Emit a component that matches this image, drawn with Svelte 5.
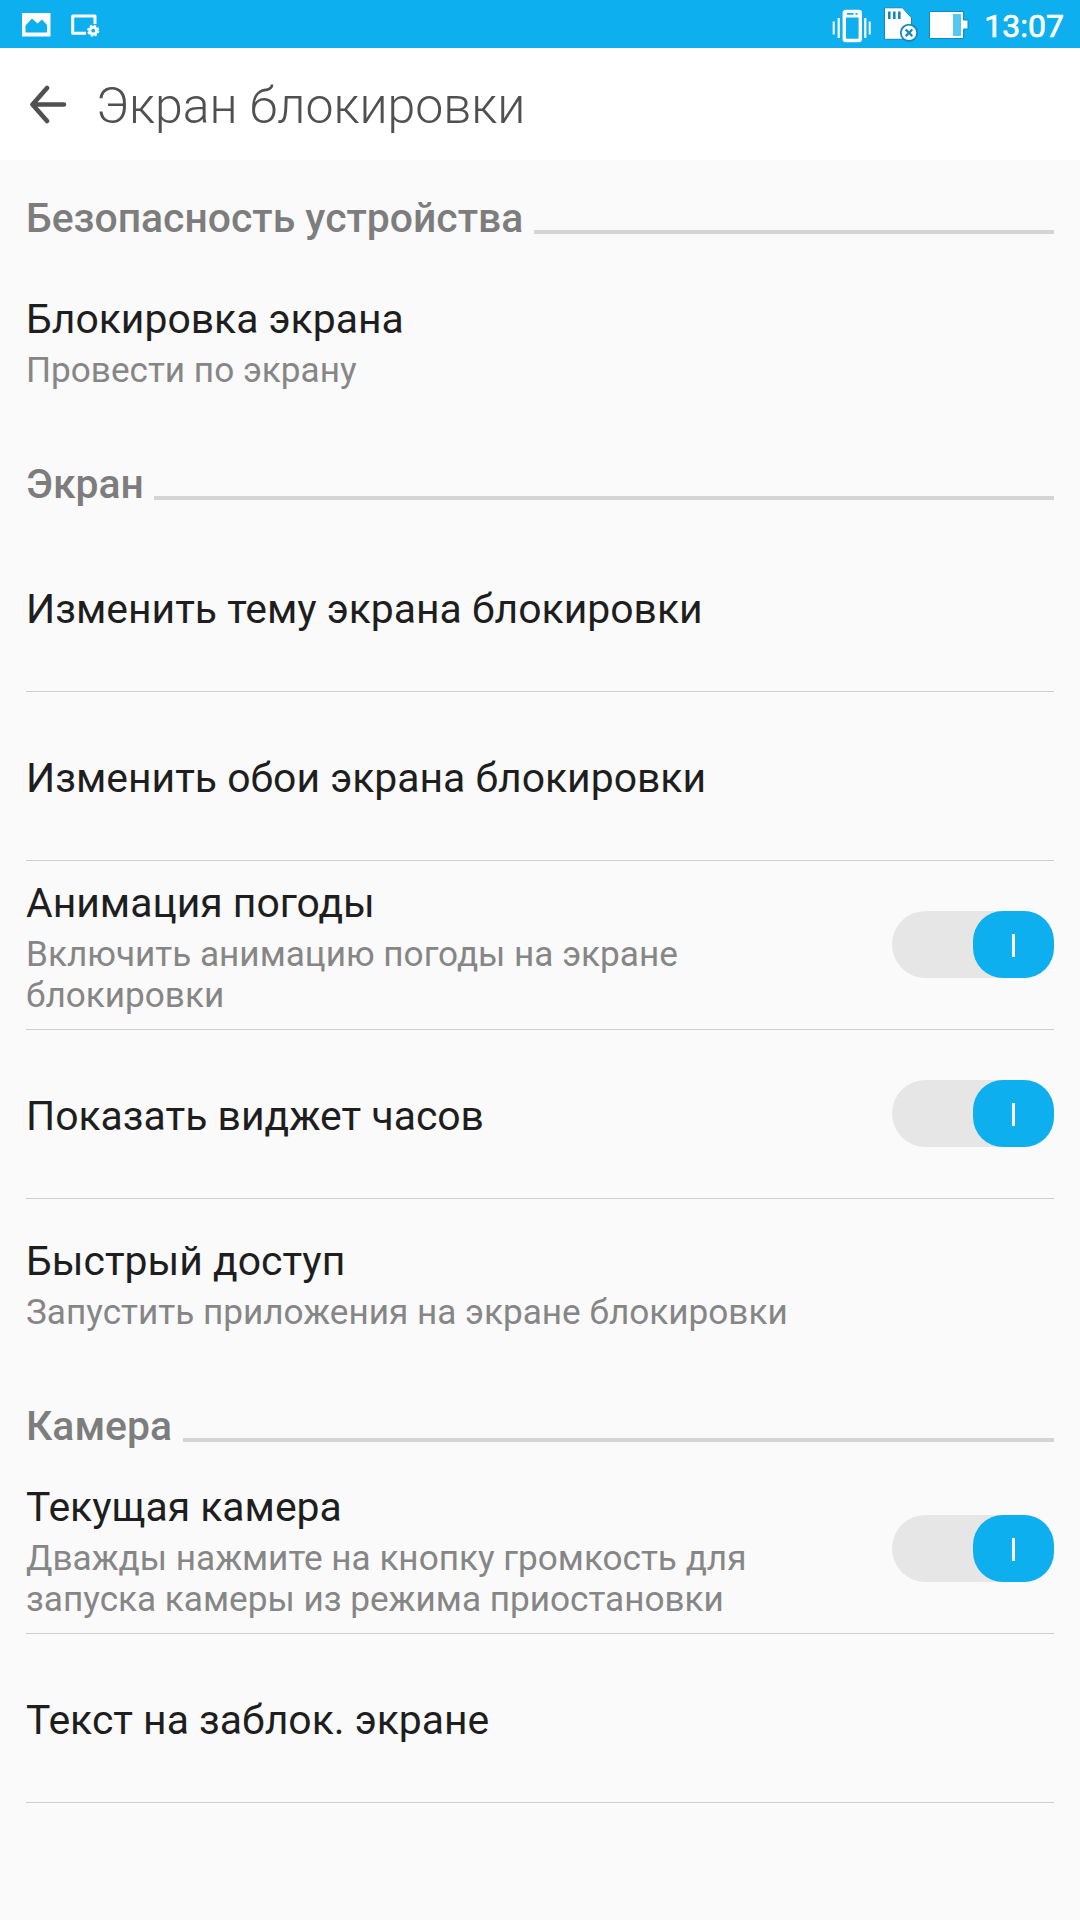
<script>
  let sections = $state([
    {
      title: "Безопасность устройства",
      items: [{ title: "Блокировка экрана", summary: "Провести по экрану" }],
    },
    {
      title: "Экран",
      items: [
        { title: "Изменить тему экрана блокировки", divider: true },
        { title: "Изменить обои экрана блокировки", divider: true },
        {
          title: "Анимация погоды",
          summary: "Включить анимацию погоды на экране блокировки",
          toggle: true,
          on: true,
          divider: true,
        },
        { title: "Показать виджет часов", toggle: true, on: true, divider: true },
        {
          title: "Быстрый доступ",
          summary: "Запустить приложения на экране блокировки",
        },
      ],
    },
    {
      title: "Камера",
      items: [
        {
          title: "Текущая камера",
          summary:
            "Дважды нажмите на кнопку громкость для запуска камеры из режима приостановки",
          toggle: true,
          on: true,
          divider: true,
        },
        { title: "Текст на заблок. экране", divider: true },
      ],
    },
  ]);
</script>

<div class="screen">
  <div class="status">
    <svg width="120" height="48" viewBox="0 0 120 48">
      <path
        fill="#fff"
        fill-rule="evenodd"
        d="M22 13h28.500v23.500h-28.500z M25.500 32.500h21.500v-7.500l-5-5.500-4.500 4-5.500-5-6.500 7z"
      />
      <path
        fill="none"
        stroke="#fff"
        stroke-width="3"
        stroke-linejoin="round"
        d="M86 33.200H72.700V16H95v8"
      />
      <circle cx="93.200" cy="30.700" r="3.400" fill="none" stroke="#fff" stroke-width="3" />
      <circle
        cx="93.200"
        cy="30.700"
        r="5.200"
        fill="none"
        stroke="#fff"
        stroke-width="1.800"
        stroke-dasharray="2.300 1.784"
      />
    </svg>
    <div class="status-right">
      <svg width="162" height="48" viewBox="0 0 162 48">
        <g fill="none" stroke="#fff">
          <rect x="24.300" y="11.500" width="16" height="29" rx="1.500" stroke-width="3.400" />
          <path d="M24 14h17" stroke-width="7" />
          <path d="M18.700 18v20M45.300 18v20" stroke-width="2.200" />
          <path d="M13.700 21.500v13M49.700 21.500v13" stroke-width="2" />
        </g>
        <path d="M27 13.900h6.500M35.500 13.900h2" stroke="#0dafef" stroke-width="1.800" />

        <path d="M64.500 7.800h18l9 10v21.500h-27z" fill="#fff" stroke="#1089bd" />
        <path
          d="M69.300 11.500v7.500M74.300 11.500v7.500M79.300 11.500v7.500"
          stroke="#1089bd"
          stroke-width="2.600"
        />
        <circle cx="89" cy="32.800" r="8.200" fill="#fff" stroke="#1089bd" stroke-width="1.800" />
        <path
          d="M85.700 29.500l6.600 6.600M92.300 29.500l-6.600 6.600"
          stroke="#1089bd"
          stroke-width="2.200"
        />

        <path
          d="M109.500 11.500h34v8.500h4.500v9h-4.500v9.500h-34z"
          fill="#fff"
          stroke="#1089bd"
        />
        <path d="M133 14h8v22h-8z" fill="#56c7f3" />
      </svg>
      <span class="clock">13:07</span>
    </div>
  </div>

  <header>
    <svg class="back" width="38" height="40" viewBox="0 0 38 40">
      <path
        d="M17 3L2.500 19.500L17 36M3.500 19.500H34"
        fill="none"
        stroke="#505050"
        stroke-width="4.600"
        stroke-linecap="round"
        stroke-linejoin="round"
      />
    </svg>
    <h1>Экран блокировки</h1>
  </header>

  <main>
    {#each sections as section}
      <h2><span>{section.title}</span></h2>
      {#each section.items as item}
        <div class="row" class:divider={item.divider}>
          <div class="text">
            <div class="title">{item.title}</div>
            {#if item.summary}
              <div class="summary">{item.summary}</div>
            {/if}
          </div>
          {#if item.toggle}
            <button
              class="toggle"
              class:on={item.on}
              aria-label={item.title}
              onclick={() => (item.on = !item.on)}
            >
              <span class="thumb"><i></i></span>
            </button>
          {/if}
        </div>
      {/each}
    {/each}
  </main>
</div>

<style>
  :global(body) {
    background: #fafafa;
  }
  .screen {
    width: 1080px;
    height: 1920px;
    overflow: hidden;
    background: #fafafa;
    font-family: Roboto, "Noto Sans", sans-serif;
  }
  .status {
    display: flex;
    justify-content: space-between;
    height: 48px;
    background: #0dafef;
  }
  .status-right {
    display: grid;
    grid-template-columns: 162px 98px;
  }
  .clock {
    color: #fff;
    font-size: 32px;
    font-weight: 400;
    -webkit-text-stroke: 0.7px #fff;
    line-height: 48px;
    padding-top: 2px;
    text-align: right;
    padding-right: 16px;
  }
  header {
    display: flex;
    align-items: center;
    height: 112px;
    box-sizing: border-box;
    padding-left: 30px;
    background: #fff;
  }
  .back {
    margin-top: 1px;
  }
  h1 {
    margin: 4px 0 0 28px;
    color: #505050;
    font-size: 50px;
    font-weight: 300;
    line-height: 60px;
  }
  main {
    padding: 0 26px;
  }
  h2 {
    display: flex;
    align-items: flex-end;
    gap: 10.5px;
    height: 97px;
    box-sizing: border-box;
    padding-bottom: 23px;
    margin: 0;
    color: #7d7d7d;
    font-size: 40.9px;
    font-weight: 500;
    line-height: 48px;
  }
  h2 span {
    margin-bottom: -8px;
  }
  h2::after {
    content: "";
    flex: 1;
    height: 4px;
    background: #d5d5d5;
  }
  .row {
    display: flex;
    align-items: center;
    justify-content: space-between;
    gap: 120px;
    height: 169px;
    box-sizing: border-box;
    border-bottom: 1px solid transparent;
  }
  .divider {
    border-bottom-color: #cfcfcf;
  }
  .text {
    padding-top: 4px;
  }
  .title {
    color: #1e1e1e;
    font-size: 40.9px;
    line-height: 50px;
  }
  .summary {
    color: #868686;
    font-size: 35.15px;
    line-height: 41px;
    padding: 6px 0 1px;
  }
  .toggle {
    display: flex;
    flex: none;
    width: 162px;
    height: 67px;
    margin-bottom: 2px;
    padding: 0;
    border: 0;
    border-radius: 34px;
    background: #e6e6e6;
  }
  .toggle.on {
    justify-content: flex-end;
  }
  .thumb {
    display: flex;
    align-items: center;
    justify-content: center;
    width: 81px;
    height: 67px;
    border-radius: 30px;
    background: #bdbdbd;
  }
  .on .thumb {
    background: #0dafef;
  }
  .thumb i {
    width: 3px;
    height: 23px;
    margin-top: 2px;
    background: #fff;
  }
</style>
